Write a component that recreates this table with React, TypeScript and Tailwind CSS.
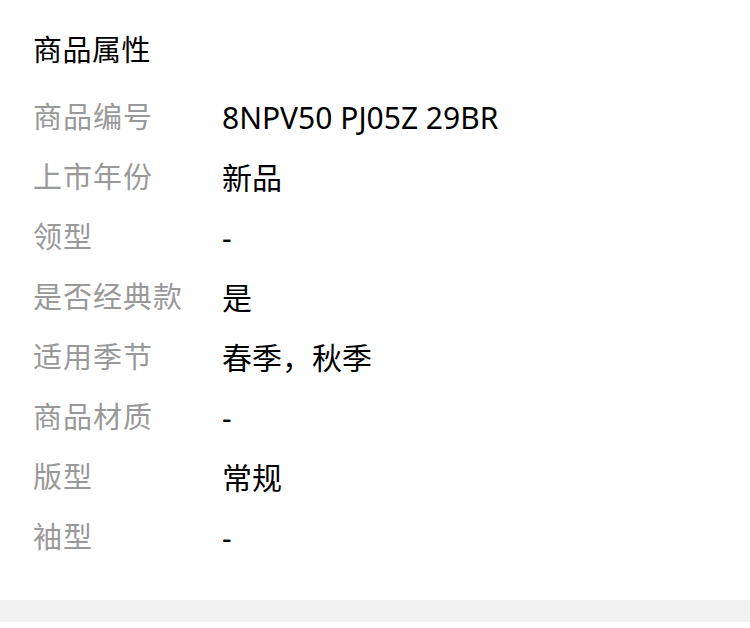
import React from 'react';

const rows: { label: string; value: string }[] = [
  { label: '商品编号', value: '8NPV50 PJ05Z 29BR' },
  { label: '上市年份', value: '新品' },
  { label: '领型', value: '-' },
  { label: '是否经典款', value: '是' },
  { label: '适用季节', value: '春季，秋季' },
  { label: '商品材质', value: '-' },
  { label: '版型', value: '常规' },
  { label: '袖型', value: '-' },
];

const App = () => {
  return (
    <div className="w-[750px] h-[628px] bg-white font-['Noto_Sans','Noto_Sans_CJK_SC',sans-serif] flex flex-col">
      <div className="flex-1 px-[33px] pt-[31px]">
        <h2 className="text-[29px] leading-[38px] text-black font-normal tracking-[0.5px]">商品属性</h2>
        <div className="mt-[18px] flex flex-col">
          {rows.map((row, i) => (
            <div key={i} className="flex items-center h-[60px]">
              <span className="w-[189px] text-[29px] tracking-[1px] text-[#999]">{row.label}</span>
              <span className="text-[30px] text-black">{row.value}</span>
            </div>
          ))}
        </div>
      </div>
      <div className="h-[22px] bg-[#f1f1f1]" />
      <div className="h-[6px] bg-white" />
    </div>
  );
};

export default App;
